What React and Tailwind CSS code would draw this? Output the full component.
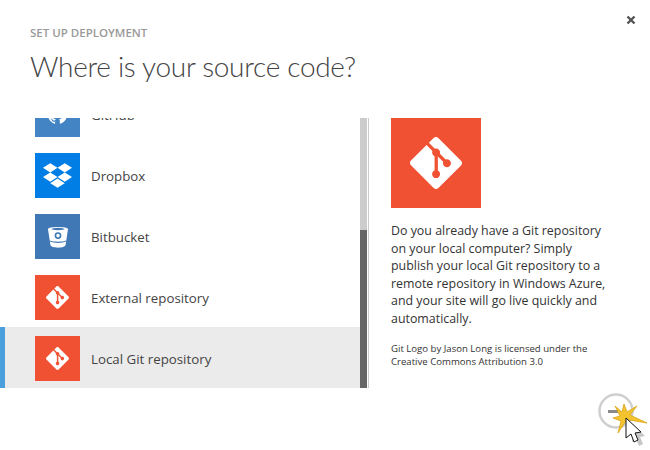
import { SiDropbox, SiGit, SiGithub } from "react-icons/si";

function BitbucketIcon() {
  return (
    <svg viewBox="0 0 20 22" className="w-5 h-[22px]">
      <path d="M0 3.2C0 .4 20 .4 20 3.2L17.6 18.8C17.2 22.6 2.8 22.6 2.4 18.8Z" fill="#fff" />
      <ellipse cx="10" cy="3" rx="6.5" ry="1.2" fill="#3f78b5" />
      <circle cx="10" cy="9.6" r="2.6" fill="none" stroke="#3f78b5" strokeWidth="1.6" />
      <path d="M1.6 14.6C6 16.2 14 16.2 18.4 14.6L18.2 15.6C14 17.4 6 17.4 1.8 15.6Z" fill="#3f78b5" />
    </svg>
  );
}

const rows = [
  { name: "GitHub", bg: "bg-[#4384c5]", icon: <SiGithub className="text-white w-[19px] h-[19px]" /> },
  { name: "Dropbox", bg: "bg-[#007ee5]", icon: <SiDropbox className="text-white w-[29px] h-[29px]" /> },
  { name: "Bitbucket", bg: "bg-[#3f78b5]", icon: <BitbucketIcon /> },
  { name: "External repository", bg: "bg-[#f05133]", icon: <SiGit className="text-white w-[23px] h-[23px]" /> },
  { name: "Local Git repository", bg: "bg-[#f05133]", icon: <SiGit className="text-white w-[23px] h-[23px]" />, selected: true },
];

function Row({ row }) {
  return (
    <div
      className={
        row.selected
          ? "shrink-0 h-[61px] flex items-start border-l-[5px] border-[#4a9fdc] bg-[#ebebeb] pl-[30px] pt-[9px]"
          : "shrink-0 h-[61px] flex items-start border-l-[5px] border-transparent pl-[30px] pt-[9px]"
      }
    >
      <div className={`w-[45px] h-[45px] flex items-center justify-center ${row.bg}`}>{row.icon}</div>
      <span className="ml-[11px] mt-[13px] text-[13.3px] leading-[20px] text-[#444]">{row.name}</span>
    </div>
  );
}

// recorded click marker sitting over the next button
function ClickCursor() {
  return (
    <svg viewBox="0 0 70 70" className="absolute left-[580px] top-[380px] w-[70px] h-[70px]">
      <circle cx="36" cy="31" r="16.5" fill="none" stroke="#cfcfcf" strokeWidth="2.5" />
      <rect x="28" y="30" width="10" height="3" fill="#8a8a8a" />
      <path
        d="M35 26L42 32L44 24L47 32L57 26L50 35L67 43L49 40L47 44L46 41L38 53L41 41L33 38L40 36Z"
        fill="#f4c430"
        stroke="#d9a514"
        strokeWidth="0.8"
      />
      <path d="M50 42L62 54L57 55L60 62L56 64L53 57L49 60Z" fill="#999" opacity="0.55" transform="translate(3 2)" />
      <path d="M46 38L46 58L51 54L54 62L58 60L55 53L61 52Z" fill="#fff" stroke="#111" strokeWidth="1" />
    </svg>
  );
}

export default function App() {
  return (
    <div className="relative w-[650px] h-[450px] overflow-hidden bg-white font-['Open_Sans',sans-serif]">
      <button className="absolute right-[14px] top-[15px] w-[10px] h-[10px] text-[#555]">
        <svg viewBox="0 0 10 10" className="w-[10px] h-[10px]">
          <path d="M1.5 1.5L8.5 8.5M8.5 1.5L1.5 8.5" stroke="currentColor" strokeWidth="2.4" />
        </svg>
      </button>

      <div className="h-[118px] pl-[30px] pt-[25px]">
        <div className="text-[11.5px] leading-[16px] font-semibold text-[#999]">SET UP DEPLOYMENT</div>
        <h1 className="mt-[5px] font-['Lato',sans-serif] text-[28px] leading-[40px] font-light tracking-[-0.3px] text-[#444]">Where is your source code?</h1>
      </div>

      <div className="flex h-[270px]">
        <div className="w-[360px] flex flex-col justify-end overflow-hidden">
          {rows.map((row) => (
            <Row key={row.name} row={row} />
          ))}
        </div>
        <div className="w-[7px] bg-[#ccc] flex flex-col justify-end">
          <div className="h-[158px] bg-[#666]" />
        </div>
        <div className="w-px ml-px bg-[#ccc]" />
        <div className="ml-[22px] w-[218px]">
          <div className="w-[90px] h-[90px] bg-[#f05133] flex items-center justify-center">
            <SiGit className="text-white w-[52px] h-[52px]" />
          </div>
          <p className="mt-[14px] text-[12.4px] leading-[17.5px] text-[#333]">
            Do you already have a Git repository on your local computer? Simply publish your local Git repository to a remote repository in Windows Azure, and your site will go live quickly and automatically.
          </p>
          <p className="mt-[15px] text-[9.6px] leading-[13px] text-[#333]">
            Git Logo by Jason Long is licensed under the Creative Commons Attribution 3.0
          </p>
        </div>
      </div>

      <ClickCursor />
    </div>
  );
}
